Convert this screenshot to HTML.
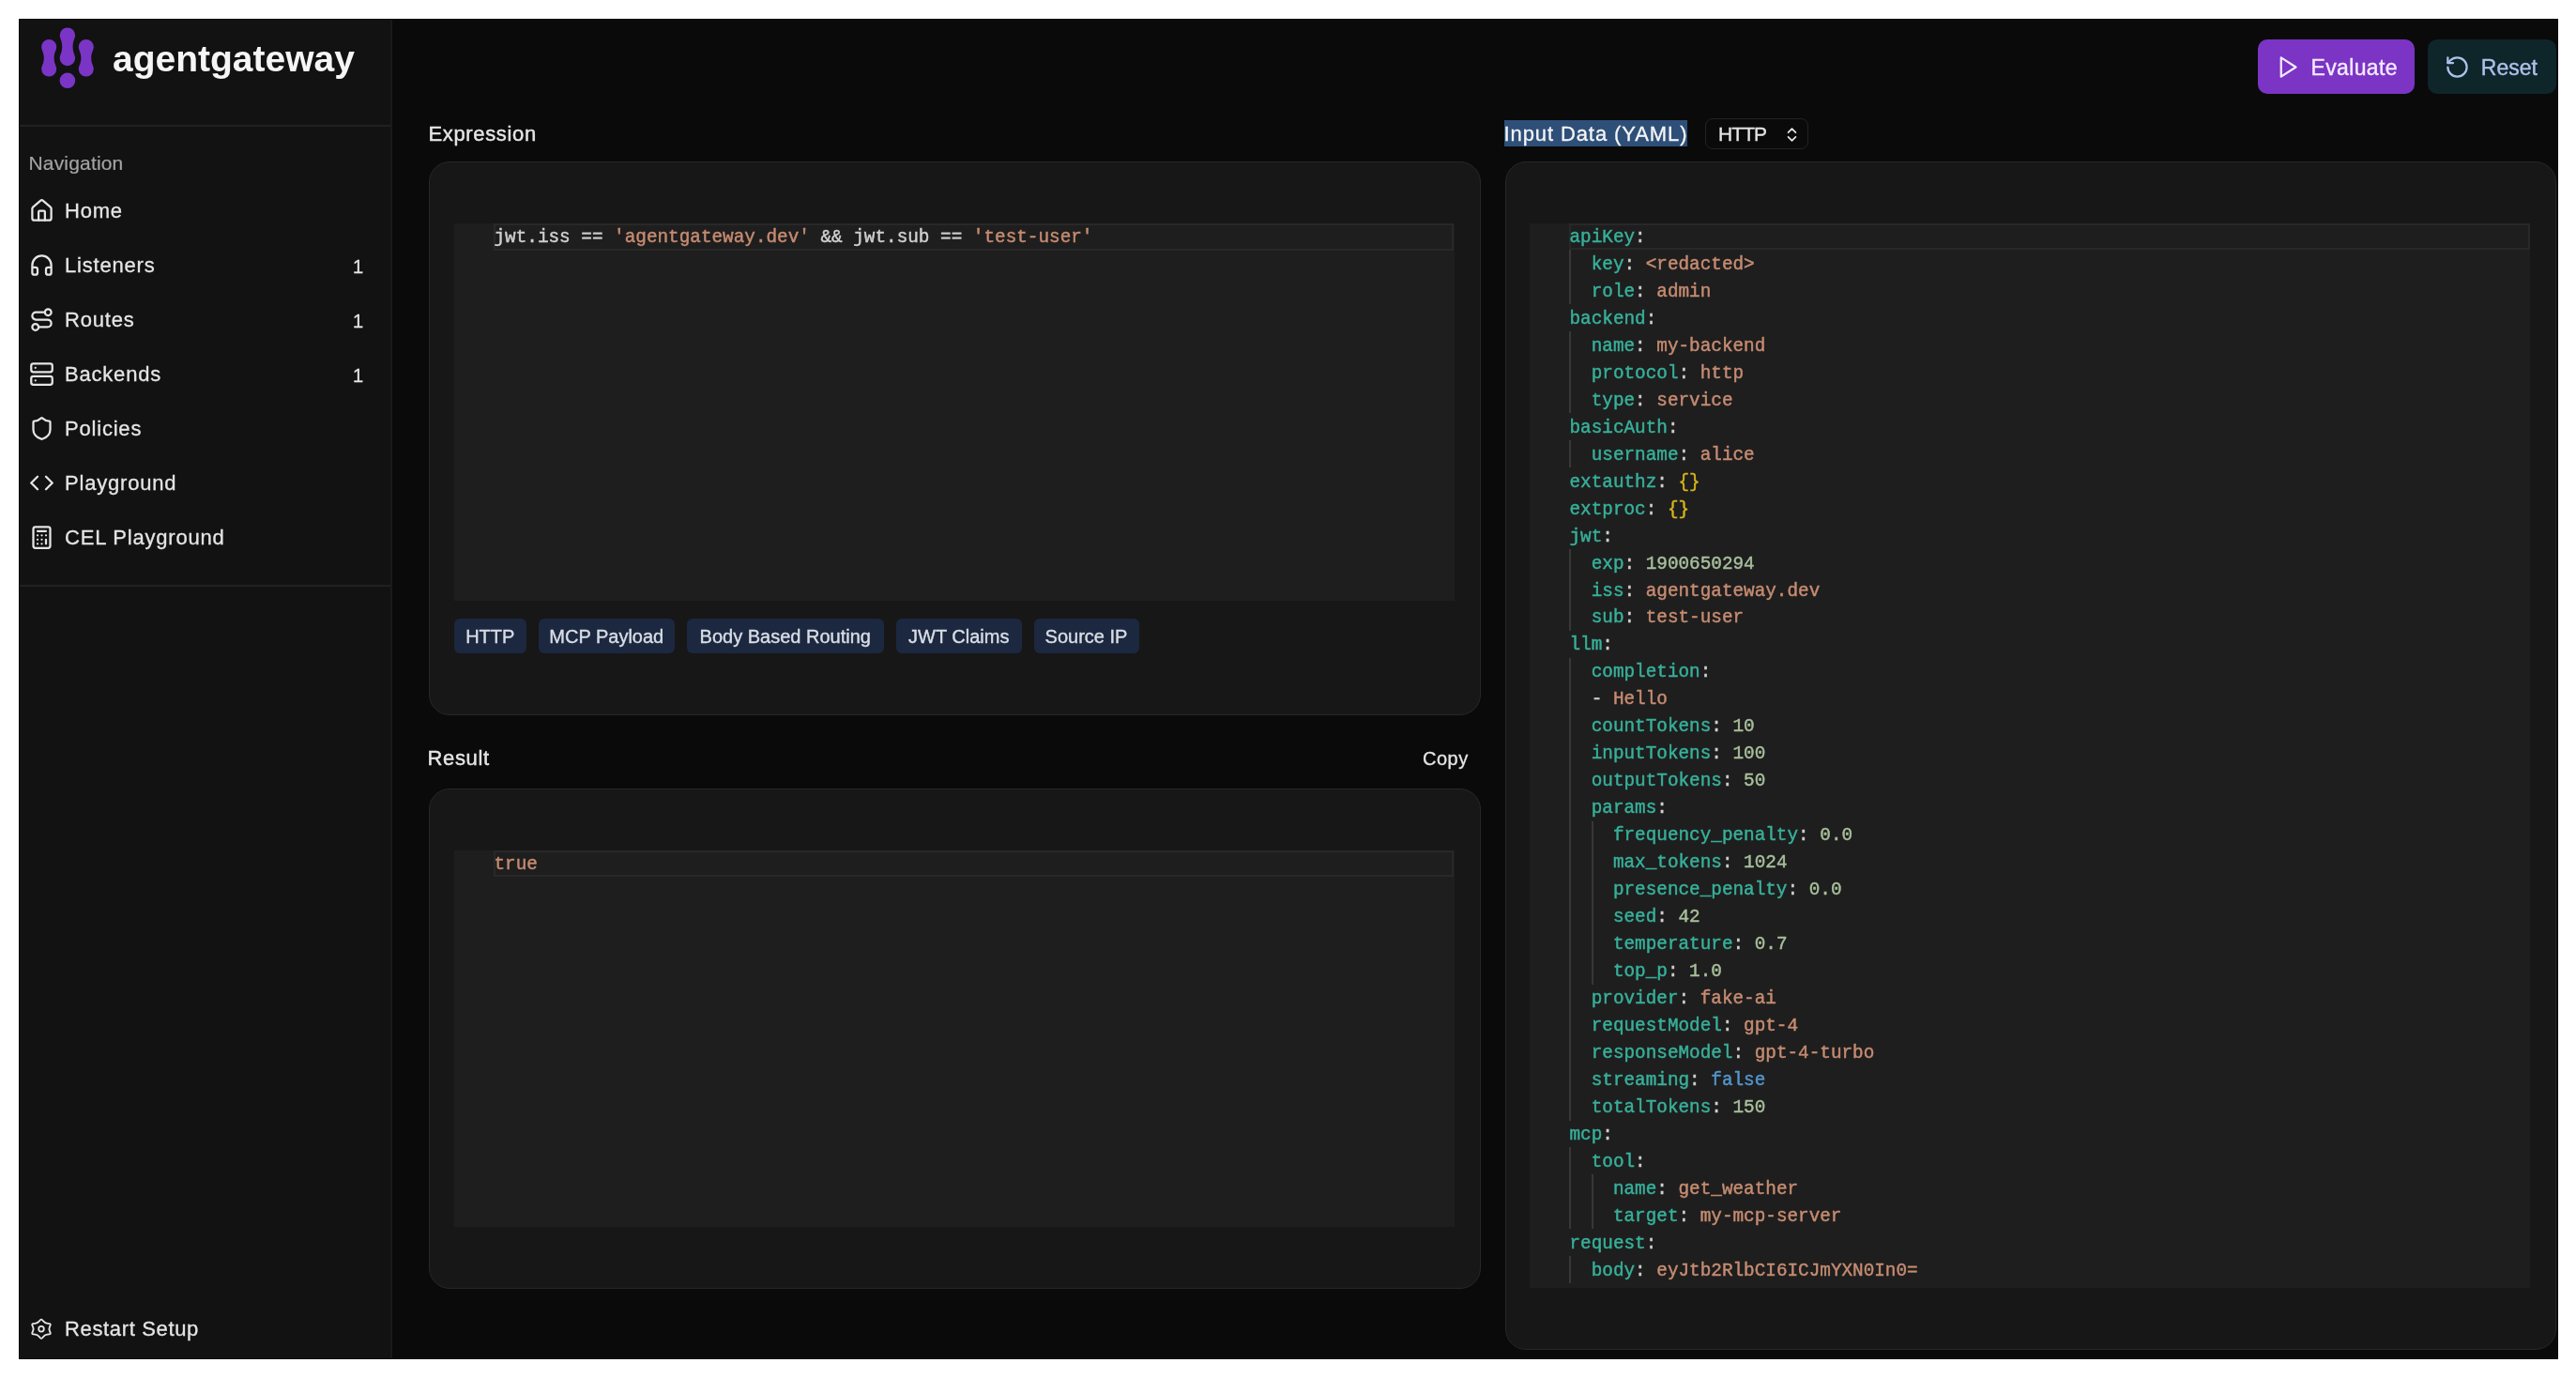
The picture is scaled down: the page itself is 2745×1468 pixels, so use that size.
<!DOCTYPE html>
<html><head><meta charset="utf-8"><title>agentgateway CEL Playground</title>
<style>
html,body{margin:0;padding:0;}
body{width:2745px;height:1468px;background:#ffffff;position:relative;overflow:hidden;font-family:'Liberation Sans', sans-serif;}
#root{position:absolute;left:0;top:0;width:2745px;height:1468px;will-change:transform;}
.r{position:absolute;display:block;}
.t{position:absolute;white-space:pre;}
.tag{background:#1c2840;border-radius:6px;color:#d8dde5;font-size:20px;line-height:39px;-webkit-text-stroke:0.4px #d8dde5;text-align:center;font-family:'Liberation Sans', sans-serif;white-space:pre;}
</style></head><body>
<div id="root">
<div class="r" style="left:20px;top:20px;width:2706px;height:1428px;background:#0a0a0a;"></div>
<div class="r" style="left:20px;top:20px;width:396px;height:1428px;background:#121212;"></div>
<div class="r" style="left:416px;top:20px;width:2px;height:1428px;background:#1a1a1a;"></div>
<div class="r" style="left:20px;top:133px;width:396px;height:2px;background:#212121;"></div>
<div class="r" style="left:20px;top:623px;width:396px;height:2px;background:#212121;"></div>
<svg class="r" style="left:36px;top:24px" width="72" height="76" viewBox="36 24 72 76">
<g fill="#7b35c6">
<path d="M44.2,50 a8,8 0 0 1 16,0 c0,3.5 -2.6,5.8 -2.6,11.8 c0,6 2.6,8.3 2.6,11.8 a8,8 0 0 1 -16,0 c0,-3.5 2.6,-5.8 2.6,-11.8 c0,-6 -2.6,-8.3 -2.6,-11.8z"/>
<path d="M83.8,50 a8,8 0 0 1 16,0 c0,3.5 -2.6,5.8 -2.6,11.8 c0,6 2.6,8.3 2.6,11.8 a8,8 0 0 1 -16,0 c0,-3.5 2.6,-5.8 2.6,-11.8 c0,-6 -2.6,-8.3 -2.6,-11.8z"/>
<path d="M63.7,37.6 a8.2,8.2 0 0 1 16.4,0 c0,3.4 -2.5,5.6 -2.5,12.2 c0,6.6 2.5,8.8 2.5,12.2 a8.2,8.2 0 0 1 -16.4,0 c0,-3.4 2.5,-5.6 2.5,-12.2 c0,-6.6 -2.5,-8.8 -2.5,-12.2z"/>
<circle cx="71.9" cy="85.8" r="8.3"/>
</g></svg>
<div class="t" style="left:120.00px;top:42.98px;font-size:39px;line-height:39px;color:#f5f5f5;font-weight:700;font-family:'Liberation Sans', sans-serif;">agentgateway</div>
<div class="t" style="left:30.50px;top:163.42px;font-size:21px;line-height:21px;color:#a3a3a3;font-weight:400;font-family:'Liberation Sans', sans-serif;letter-spacing:0.17px;-webkit-text-stroke:0.2px #a3a3a3;">Navigation</div>
<svg class="r" style="left:30.50px;top:210.50px" width="27" height="27" viewBox="0 0 24 24" fill="none" stroke="#e5e5e5" stroke-width="2" stroke-linecap="round" stroke-linejoin="round"><path d="M15 21v-8a1 1 0 0 0-1-1h-4a1 1 0 0 0-1 1v8"/><path d="M3 10a2 2 0 0 1 .709-1.528l7-5.999a2 2 0 0 1 2.582 0l7 5.999A2 2 0 0 1 21 10v9a2 2 0 0 1-2 2H5a2 2 0 0 1-2-2z"/></svg>
<div class="t" style="left:69.00px;top:213.87px;font-size:22px;line-height:22px;color:#e5e5e5;font-weight:400;font-family:'Liberation Sans', sans-serif;letter-spacing:0.8px;-webkit-text-stroke:0.3px #e5e5e5;">Home</div>
<svg class="r" style="left:30.50px;top:268.50px" width="27" height="27" viewBox="0 0 24 24" fill="none" stroke="#e5e5e5" stroke-width="2" stroke-linecap="round" stroke-linejoin="round"><path d="M3 14h3a2 2 0 0 1 2 2v3a2 2 0 0 1-2 2H5a2 2 0 0 1-2-2v-7a9 9 0 0 1 18 0v7a2 2 0 0 1-2 2h-1a2 2 0 0 1-2-2v-3a2 2 0 0 1 2-2h3"/></svg>
<div class="t" style="left:69.00px;top:271.87px;font-size:22px;line-height:22px;color:#e5e5e5;font-weight:400;font-family:'Liberation Sans', sans-serif;letter-spacing:0.8px;-webkit-text-stroke:0.3px #e5e5e5;">Listeners</div>
<div class="t" style="left:376.00px;top:273.57px;font-size:20px;line-height:20px;color:#e5e5e5;font-weight:400;font-family:'Liberation Sans', sans-serif;-webkit-text-stroke:0.3px #e5e5e5;">1</div>
<svg class="r" style="left:30.50px;top:326.50px" width="27" height="27" viewBox="0 0 24 24" fill="none" stroke="#e5e5e5" stroke-width="2" stroke-linecap="round" stroke-linejoin="round"><circle cx="6" cy="19" r="3"/><path d="M9 19h8.5a3.5 3.5 0 0 0 0-7h-11a3.5 3.5 0 0 1 0-7H15"/><circle cx="18" cy="5" r="3"/></svg>
<div class="t" style="left:69.00px;top:329.87px;font-size:22px;line-height:22px;color:#e5e5e5;font-weight:400;font-family:'Liberation Sans', sans-serif;letter-spacing:0.8px;-webkit-text-stroke:0.3px #e5e5e5;">Routes</div>
<div class="t" style="left:376.00px;top:331.57px;font-size:20px;line-height:20px;color:#e5e5e5;font-weight:400;font-family:'Liberation Sans', sans-serif;-webkit-text-stroke:0.3px #e5e5e5;">1</div>
<svg class="r" style="left:30.50px;top:384.50px" width="27" height="27" viewBox="0 0 24 24" fill="none" stroke="#e5e5e5" stroke-width="2" stroke-linecap="round" stroke-linejoin="round"><rect width="20" height="8" x="2" y="2" rx="2" ry="2"/><rect width="20" height="8" x="2" y="14" rx="2" ry="2"/><line x1="6" x2="6.01" y1="6" y2="6"/><line x1="6" x2="6.01" y1="18" y2="18"/></svg>
<div class="t" style="left:69.00px;top:387.87px;font-size:22px;line-height:22px;color:#e5e5e5;font-weight:400;font-family:'Liberation Sans', sans-serif;letter-spacing:0.8px;-webkit-text-stroke:0.3px #e5e5e5;">Backends</div>
<div class="t" style="left:376.00px;top:389.57px;font-size:20px;line-height:20px;color:#e5e5e5;font-weight:400;font-family:'Liberation Sans', sans-serif;-webkit-text-stroke:0.3px #e5e5e5;">1</div>
<svg class="r" style="left:30.50px;top:442.50px" width="27" height="27" viewBox="0 0 24 24" fill="none" stroke="#e5e5e5" stroke-width="2" stroke-linecap="round" stroke-linejoin="round"><path d="M20 13c0 5-3.5 7.5-7.66 8.95a1 1 0 0 1-.67-.01C7.5 20.5 4 18 4 13V6a1 1 0 0 1 1-1c2 0 4.5-1.2 6.24-2.72a1.17 1.17 0 0 1 1.52 0C14.51 3.81 17 5 19 5a1 1 0 0 1 1 1z"/></svg>
<div class="t" style="left:69.00px;top:445.87px;font-size:22px;line-height:22px;color:#e5e5e5;font-weight:400;font-family:'Liberation Sans', sans-serif;letter-spacing:0.8px;-webkit-text-stroke:0.3px #e5e5e5;">Policies</div>
<svg class="r" style="left:30.50px;top:500.50px" width="27" height="27" viewBox="0 0 24 24" fill="none" stroke="#e5e5e5" stroke-width="2" stroke-linecap="round" stroke-linejoin="round"><polyline points="16 18 22 12 16 6"/><polyline points="8 6 2 12 8 18"/></svg>
<div class="t" style="left:69.00px;top:503.87px;font-size:22px;line-height:22px;color:#e5e5e5;font-weight:400;font-family:'Liberation Sans', sans-serif;letter-spacing:0.8px;-webkit-text-stroke:0.3px #e5e5e5;">Playground</div>
<svg class="r" style="left:30.50px;top:558.50px" width="27" height="27" viewBox="0 0 24 24" fill="none" stroke="#e5e5e5" stroke-width="2" stroke-linecap="round" stroke-linejoin="round"><rect width="16" height="20" x="4" y="2" rx="2"/><line x1="8" x2="16" y1="6" y2="6"/><line x1="16" x2="16" y1="14" y2="18"/><path d="M16 10h.01"/><path d="M12 10h.01"/><path d="M8 10h.01"/><path d="M12 14h.01"/><path d="M8 14h.01"/><path d="M12 18h.01"/><path d="M8 18h.01"/></svg>
<div class="t" style="left:69.00px;top:561.87px;font-size:22px;line-height:22px;color:#e5e5e5;font-weight:400;font-family:'Liberation Sans', sans-serif;letter-spacing:0.8px;-webkit-text-stroke:0.3px #e5e5e5;">CEL Playground</div>
<svg class="r" style="left:26px;top:1395px" width="40" height="40" viewBox="0 0 40 40" fill="none" stroke="#e5e5e5" stroke-width="1.8" stroke-linejoin="round"><path d="M16.89,11.23 Q18.00,9.95 19.11,11.23 L20.38,12.69 Q21.96,14.51 24.49,14.85 L26.52,15.12 Q28.29,15.35 27.63,16.86 L26.87,18.59 Q25.92,20.75 26.87,22.91 L27.63,24.64 Q28.29,26.15 26.52,26.38 L24.49,26.65 Q21.96,26.99 20.38,28.81 L19.11,30.27 Q18.00,31.55 16.89,30.27 L15.62,28.81 Q14.04,26.99 11.51,26.65 L9.48,26.38 Q7.71,26.15 8.37,24.64 L9.13,22.91 Q10.08,20.75 9.13,18.59 L8.37,16.86 Q7.71,15.35 9.48,15.12 L11.51,14.85 Q14.04,14.51 15.62,12.69Z"/><circle cx="18" cy="20.75" r="2.8"/></svg>
<div class="t" style="left:69.00px;top:1405.37px;font-size:22px;line-height:22px;color:#e5e5e5;font-weight:400;font-family:'Liberation Sans', sans-serif;letter-spacing:0.65px;-webkit-text-stroke:0.3px #e5e5e5;">Restart Setup</div>
<div class="r" style="left:2406px;top:42px;width:167px;height:58px;background:#7b34c4;border-radius:10px;"></div>
<svg class="r" style="left:2424px;top:57.5px" width="27" height="27" viewBox="0 0 24 24" fill="none" stroke="#f3eaff" stroke-width="2" stroke-linecap="round" stroke-linejoin="round"><polygon points="6 3 20 12 6 21 6 3"/></svg>
<div class="t" style="left:2462.50px;top:60.93px;font-size:23px;line-height:23px;color:#f3eaff;font-weight:400;font-family:'Liberation Sans', sans-serif;letter-spacing:0.35px;-webkit-text-stroke:0.4px #f3eaff;">Evaluate</div>
<div class="r" style="left:2587px;top:42px;width:137px;height:58px;background:#0e252a;border-radius:10px;"></div>
<svg class="r" style="left:2605px;top:57.5px" width="27" height="27" viewBox="0 0 24 24" fill="none" stroke="#a9c3e8" stroke-width="2" stroke-linecap="round" stroke-linejoin="round"><path d="M3 12a9 9 0 1 0 9-9 9.75 9.75 0 0 0-6.74 2.74L3 8"/><path d="M3 3v5h5"/></svg>
<div class="t" style="left:2643.80px;top:60.93px;font-size:23px;line-height:23px;color:#adc2ea;font-weight:400;font-family:'Liberation Sans', sans-serif;-webkit-text-stroke:0.4px #adc2ea;">Reset</div>
<div class="t" style="left:456.50px;top:132.37px;font-size:22px;line-height:22px;color:#e5e5e5;font-weight:400;font-family:'Liberation Sans', sans-serif;letter-spacing:0.65px;-webkit-text-stroke:0.45px #e5e5e5;">Expression</div>
<div class="t" style="left:455.50px;top:797.17px;font-size:22px;line-height:22px;color:#e5e5e5;font-weight:400;font-family:'Liberation Sans', sans-serif;letter-spacing:0.65px;-webkit-text-stroke:0.45px #e5e5e5;">Result</div>
<div class="t" style="left:1516.00px;top:798.07px;font-size:20px;line-height:20px;color:#e5e5e5;font-weight:400;font-family:'Liberation Sans', sans-serif;letter-spacing:0.5px;-webkit-text-stroke:0.3px #e5e5e5;">Copy</div>
<div class="r" style="left:1603px;top:127.5px;width:195px;height:28.0px;background:#2e4f78;"></div>
<div class="t" style="left:1602.50px;top:131.97px;font-size:22px;line-height:22px;color:#f5f5f5;font-weight:400;font-family:'Liberation Sans', sans-serif;letter-spacing:0.9px;-webkit-text-stroke:0.3px #f5f5f5;">Input Data (YAML)</div>
<div class="r" style="left:1817px;top:126px;width:110px;height:32.5px;background:#0a0a0a;border:1.5px solid #232323;border-radius:8px;box-sizing:border-box;"></div>
<div class="t" style="left:1831.00px;top:132.22px;font-size:21px;line-height:21px;color:#e5e5e5;font-weight:400;font-family:'Liberation Sans', sans-serif;letter-spacing:-0.9px;-webkit-text-stroke:0.3px #e5e5e5;">HTTP</div>
<svg class="r" style="left:1900px;top:133.5px" width="19" height="19" viewBox="0 0 24 24" fill="none" stroke="#e5e5e5" stroke-width="2.2" stroke-linecap="round" stroke-linejoin="round"><path d="m7 15 5 5 5-5"/><path d="m7 9 5-5 5 5"/></svg>
<div class="r" style="left:457px;top:172px;width:1121px;height:590px;background:#171717;border:1px solid #272727;border-radius:22px;box-sizing:border-box;"></div>
<div class="r" style="left:484px;top:238px;width:1066px;height:402px;background:#1e1e1e;"></div>
<div class="r" style="left:457px;top:840px;width:1121px;height:533px;background:#171717;border:1px solid #272727;border-radius:22px;box-sizing:border-box;"></div>
<div class="r" style="left:484px;top:906px;width:1066px;height:401px;background:#1e1e1e;"></div>
<div class="r" style="left:1604px;top:172px;width:1120px;height:1266px;background:#171717;border:1px solid #272727;border-radius:22px;box-sizing:border-box;"></div>
<div class="r" style="left:1630px;top:238px;width:1066px;height:1134px;background:#1e1e1e;"></div>
<div class="r tag" style="left:484px;top:659px;width:76.5px;height:37px;">HTTP</div>
<div class="r tag" style="left:574px;top:659px;width:144.5px;height:37px;">MCP Payload</div>
<div class="r tag" style="left:732px;top:659px;width:209.5px;height:37px;">Body Based Routing</div>
<div class="r tag" style="left:955px;top:659px;width:133.5px;height:37px;">JWT Claims</div>
<div class="r tag" style="left:1101.5px;top:659px;width:112.0px;height:37px;">Source IP</div>
<div class="r" style="left:526px;top:238px;width:1023px;height:28.970000000000027px;border:2px solid #282828;box-sizing:border-box;"></div>
<div class="t" style="left:526.50px;top:244.39px;font-size:19.33px;line-height:19.33px;color:#cfcfcf;font-weight:400;font-family:'Liberation Mono', monospace;"><span style="color:#cfcfcf;-webkit-text-stroke:0.45px #cfcfcf">jwt.iss == </span><span style="color:#c68b71;-webkit-text-stroke:0.45px #c68b71">'agentgateway.dev'</span><span style="color:#cfcfcf;-webkit-text-stroke:0.45px #cfcfcf"> &amp;&amp; jwt.sub == </span><span style="color:#c68b71;-webkit-text-stroke:0.45px #c68b71">'test-user'</span></div>
<div class="r" style="left:526px;top:905.5px;width:1023px;height:28.970000000000027px;border:2px solid #282828;box-sizing:border-box;"></div>
<div class="t" style="left:526.50px;top:911.89px;font-size:19.33px;line-height:19.33px;color:#cfcfcf;font-weight:400;font-family:'Liberation Mono', monospace;"><span style="color:#c68b71;-webkit-text-stroke:0.45px #c68b71">true</span></div>
<div class="r" style="left:1672px;top:237.5px;width:1024px;height:28.970000000000027px;border:2px solid #282828;box-sizing:border-box;"></div>
<div class="t" style="left:1672.50px;top:243.89px;font-size:19.33px;line-height:19.33px;color:#cfcfcf;font-weight:400;font-family:'Liberation Mono', monospace;"><span style="color:#37b09a;-webkit-text-stroke:0.45px #37b09a">apiKey</span><span style="color:#cfcfcf;-webkit-text-stroke:0.45px #cfcfcf">:</span></div>
<div class="r" style="left:1672px;top:266px;width:2px;height:29px;background:#383838;"></div>
<div class="t" style="left:1695.70px;top:272.86px;font-size:19.33px;line-height:19.33px;color:#cfcfcf;font-weight:400;font-family:'Liberation Mono', monospace;"><span style="color:#37b09a;-webkit-text-stroke:0.45px #37b09a">key</span><span style="color:#cfcfcf;-webkit-text-stroke:0.45px #cfcfcf">: </span><span style="color:#c68b71;-webkit-text-stroke:0.45px #c68b71">&lt;redacted&gt;</span></div>
<div class="r" style="left:1672px;top:295px;width:2px;height:29px;background:#383838;"></div>
<div class="t" style="left:1695.70px;top:301.83px;font-size:19.33px;line-height:19.33px;color:#cfcfcf;font-weight:400;font-family:'Liberation Mono', monospace;"><span style="color:#37b09a;-webkit-text-stroke:0.45px #37b09a">role</span><span style="color:#cfcfcf;-webkit-text-stroke:0.45px #cfcfcf">: </span><span style="color:#c68b71;-webkit-text-stroke:0.45px #c68b71">admin</span></div>
<div class="t" style="left:1672.50px;top:330.80px;font-size:19.33px;line-height:19.33px;color:#cfcfcf;font-weight:400;font-family:'Liberation Mono', monospace;"><span style="color:#37b09a;-webkit-text-stroke:0.45px #37b09a">backend</span><span style="color:#cfcfcf;-webkit-text-stroke:0.45px #cfcfcf">:</span></div>
<div class="r" style="left:1672px;top:353px;width:2px;height:29px;background:#383838;"></div>
<div class="t" style="left:1695.70px;top:359.77px;font-size:19.33px;line-height:19.33px;color:#cfcfcf;font-weight:400;font-family:'Liberation Mono', monospace;"><span style="color:#37b09a;-webkit-text-stroke:0.45px #37b09a">name</span><span style="color:#cfcfcf;-webkit-text-stroke:0.45px #cfcfcf">: </span><span style="color:#c68b71;-webkit-text-stroke:0.45px #c68b71">my-backend</span></div>
<div class="r" style="left:1672px;top:382px;width:2px;height:29px;background:#383838;"></div>
<div class="t" style="left:1695.70px;top:388.74px;font-size:19.33px;line-height:19.33px;color:#cfcfcf;font-weight:400;font-family:'Liberation Mono', monospace;"><span style="color:#37b09a;-webkit-text-stroke:0.45px #37b09a">protocol</span><span style="color:#cfcfcf;-webkit-text-stroke:0.45px #cfcfcf">: </span><span style="color:#c68b71;-webkit-text-stroke:0.45px #c68b71">http</span></div>
<div class="r" style="left:1672px;top:411px;width:2px;height:29px;background:#383838;"></div>
<div class="t" style="left:1695.70px;top:417.71px;font-size:19.33px;line-height:19.33px;color:#cfcfcf;font-weight:400;font-family:'Liberation Mono', monospace;"><span style="color:#37b09a;-webkit-text-stroke:0.45px #37b09a">type</span><span style="color:#cfcfcf;-webkit-text-stroke:0.45px #cfcfcf">: </span><span style="color:#c68b71;-webkit-text-stroke:0.45px #c68b71">service</span></div>
<div class="t" style="left:1672.50px;top:446.68px;font-size:19.33px;line-height:19.33px;color:#cfcfcf;font-weight:400;font-family:'Liberation Mono', monospace;"><span style="color:#37b09a;-webkit-text-stroke:0.45px #37b09a">basicAuth</span><span style="color:#cfcfcf;-webkit-text-stroke:0.45px #cfcfcf">:</span></div>
<div class="r" style="left:1672px;top:469px;width:2px;height:29px;background:#383838;"></div>
<div class="t" style="left:1695.70px;top:475.65px;font-size:19.33px;line-height:19.33px;color:#cfcfcf;font-weight:400;font-family:'Liberation Mono', monospace;"><span style="color:#37b09a;-webkit-text-stroke:0.45px #37b09a">username</span><span style="color:#cfcfcf;-webkit-text-stroke:0.45px #cfcfcf">: </span><span style="color:#c68b71;-webkit-text-stroke:0.45px #c68b71">alice</span></div>
<div class="t" style="left:1672.50px;top:504.62px;font-size:19.33px;line-height:19.33px;color:#cfcfcf;font-weight:400;font-family:'Liberation Mono', monospace;"><span style="color:#37b09a;-webkit-text-stroke:0.45px #37b09a">extauthz</span><span style="color:#cfcfcf;-webkit-text-stroke:0.45px #cfcfcf">: </span><span style="color:#d6b31c;-webkit-text-stroke:0.45px #d6b31c">{}</span></div>
<div class="t" style="left:1672.50px;top:533.59px;font-size:19.33px;line-height:19.33px;color:#cfcfcf;font-weight:400;font-family:'Liberation Mono', monospace;"><span style="color:#37b09a;-webkit-text-stroke:0.45px #37b09a">extproc</span><span style="color:#cfcfcf;-webkit-text-stroke:0.45px #cfcfcf">: </span><span style="color:#d6b31c;-webkit-text-stroke:0.45px #d6b31c">{}</span></div>
<div class="t" style="left:1672.50px;top:562.56px;font-size:19.33px;line-height:19.33px;color:#cfcfcf;font-weight:400;font-family:'Liberation Mono', monospace;"><span style="color:#37b09a;-webkit-text-stroke:0.45px #37b09a">jwt</span><span style="color:#cfcfcf;-webkit-text-stroke:0.45px #cfcfcf">:</span></div>
<div class="r" style="left:1672px;top:585px;width:2px;height:29px;background:#383838;"></div>
<div class="t" style="left:1695.70px;top:591.53px;font-size:19.33px;line-height:19.33px;color:#cfcfcf;font-weight:400;font-family:'Liberation Mono', monospace;"><span style="color:#37b09a;-webkit-text-stroke:0.45px #37b09a">exp</span><span style="color:#cfcfcf;-webkit-text-stroke:0.45px #cfcfcf">: </span><span style="color:#a8bf9b;-webkit-text-stroke:0.45px #a8bf9b">1900650294</span></div>
<div class="r" style="left:1672px;top:614px;width:2px;height:29px;background:#383838;"></div>
<div class="t" style="left:1695.70px;top:620.50px;font-size:19.33px;line-height:19.33px;color:#cfcfcf;font-weight:400;font-family:'Liberation Mono', monospace;"><span style="color:#37b09a;-webkit-text-stroke:0.45px #37b09a">iss</span><span style="color:#cfcfcf;-webkit-text-stroke:0.45px #cfcfcf">: </span><span style="color:#c68b71;-webkit-text-stroke:0.45px #c68b71">agentgateway.dev</span></div>
<div class="r" style="left:1672px;top:643px;width:2px;height:29px;background:#383838;"></div>
<div class="t" style="left:1695.70px;top:649.47px;font-size:19.33px;line-height:19.33px;color:#cfcfcf;font-weight:400;font-family:'Liberation Mono', monospace;"><span style="color:#37b09a;-webkit-text-stroke:0.45px #37b09a">sub</span><span style="color:#cfcfcf;-webkit-text-stroke:0.45px #cfcfcf">: </span><span style="color:#c68b71;-webkit-text-stroke:0.45px #c68b71">test-user</span></div>
<div class="t" style="left:1672.50px;top:678.44px;font-size:19.33px;line-height:19.33px;color:#cfcfcf;font-weight:400;font-family:'Liberation Mono', monospace;"><span style="color:#37b09a;-webkit-text-stroke:0.45px #37b09a">llm</span><span style="color:#cfcfcf;-webkit-text-stroke:0.45px #cfcfcf">:</span></div>
<div class="r" style="left:1672px;top:701px;width:2px;height:29px;background:#383838;"></div>
<div class="t" style="left:1695.70px;top:707.41px;font-size:19.33px;line-height:19.33px;color:#cfcfcf;font-weight:400;font-family:'Liberation Mono', monospace;"><span style="color:#37b09a;-webkit-text-stroke:0.45px #37b09a">completion</span><span style="color:#cfcfcf;-webkit-text-stroke:0.45px #cfcfcf">:</span></div>
<div class="r" style="left:1672px;top:730px;width:2px;height:29px;background:#383838;"></div>
<div class="t" style="left:1695.70px;top:736.38px;font-size:19.33px;line-height:19.33px;color:#cfcfcf;font-weight:400;font-family:'Liberation Mono', monospace;"><span style="color:#cfcfcf;-webkit-text-stroke:0.45px #cfcfcf">- </span><span style="color:#c68b71;-webkit-text-stroke:0.45px #c68b71">Hello</span></div>
<div class="r" style="left:1672px;top:759px;width:2px;height:29px;background:#383838;"></div>
<div class="t" style="left:1695.70px;top:765.35px;font-size:19.33px;line-height:19.33px;color:#cfcfcf;font-weight:400;font-family:'Liberation Mono', monospace;"><span style="color:#37b09a;-webkit-text-stroke:0.45px #37b09a">countTokens</span><span style="color:#cfcfcf;-webkit-text-stroke:0.45px #cfcfcf">: </span><span style="color:#a8bf9b;-webkit-text-stroke:0.45px #a8bf9b">10</span></div>
<div class="r" style="left:1672px;top:788px;width:2px;height:29px;background:#383838;"></div>
<div class="t" style="left:1695.70px;top:794.32px;font-size:19.33px;line-height:19.33px;color:#cfcfcf;font-weight:400;font-family:'Liberation Mono', monospace;"><span style="color:#37b09a;-webkit-text-stroke:0.45px #37b09a">inputTokens</span><span style="color:#cfcfcf;-webkit-text-stroke:0.45px #cfcfcf">: </span><span style="color:#a8bf9b;-webkit-text-stroke:0.45px #a8bf9b">100</span></div>
<div class="r" style="left:1672px;top:817px;width:2px;height:29px;background:#383838;"></div>
<div class="t" style="left:1695.70px;top:823.29px;font-size:19.33px;line-height:19.33px;color:#cfcfcf;font-weight:400;font-family:'Liberation Mono', monospace;"><span style="color:#37b09a;-webkit-text-stroke:0.45px #37b09a">outputTokens</span><span style="color:#cfcfcf;-webkit-text-stroke:0.45px #cfcfcf">: </span><span style="color:#a8bf9b;-webkit-text-stroke:0.45px #a8bf9b">50</span></div>
<div class="r" style="left:1672px;top:846px;width:2px;height:29px;background:#383838;"></div>
<div class="t" style="left:1695.70px;top:852.26px;font-size:19.33px;line-height:19.33px;color:#cfcfcf;font-weight:400;font-family:'Liberation Mono', monospace;"><span style="color:#37b09a;-webkit-text-stroke:0.45px #37b09a">params</span><span style="color:#cfcfcf;-webkit-text-stroke:0.45px #cfcfcf">:</span></div>
<div class="r" style="left:1672px;top:875px;width:2px;height:29px;background:#383838;"></div>
<div class="r" style="left:1696px;top:875px;width:2px;height:29px;background:#383838;"></div>
<div class="t" style="left:1718.90px;top:881.23px;font-size:19.33px;line-height:19.33px;color:#cfcfcf;font-weight:400;font-family:'Liberation Mono', monospace;"><span style="color:#37b09a;-webkit-text-stroke:0.45px #37b09a">frequency_penalty</span><span style="color:#cfcfcf;-webkit-text-stroke:0.45px #cfcfcf">: </span><span style="color:#a8bf9b;-webkit-text-stroke:0.45px #a8bf9b">0.0</span></div>
<div class="r" style="left:1672px;top:904px;width:2px;height:29px;background:#383838;"></div>
<div class="r" style="left:1696px;top:904px;width:2px;height:29px;background:#383838;"></div>
<div class="t" style="left:1718.90px;top:910.20px;font-size:19.33px;line-height:19.33px;color:#cfcfcf;font-weight:400;font-family:'Liberation Mono', monospace;"><span style="color:#37b09a;-webkit-text-stroke:0.45px #37b09a">max_tokens</span><span style="color:#cfcfcf;-webkit-text-stroke:0.45px #cfcfcf">: </span><span style="color:#a8bf9b;-webkit-text-stroke:0.45px #a8bf9b">1024</span></div>
<div class="r" style="left:1672px;top:933px;width:2px;height:29px;background:#383838;"></div>
<div class="r" style="left:1696px;top:933px;width:2px;height:29px;background:#383838;"></div>
<div class="t" style="left:1718.90px;top:939.17px;font-size:19.33px;line-height:19.33px;color:#cfcfcf;font-weight:400;font-family:'Liberation Mono', monospace;"><span style="color:#37b09a;-webkit-text-stroke:0.45px #37b09a">presence_penalty</span><span style="color:#cfcfcf;-webkit-text-stroke:0.45px #cfcfcf">: </span><span style="color:#a8bf9b;-webkit-text-stroke:0.45px #a8bf9b">0.0</span></div>
<div class="r" style="left:1672px;top:962px;width:2px;height:29px;background:#383838;"></div>
<div class="r" style="left:1696px;top:962px;width:2px;height:29px;background:#383838;"></div>
<div class="t" style="left:1718.90px;top:968.14px;font-size:19.33px;line-height:19.33px;color:#cfcfcf;font-weight:400;font-family:'Liberation Mono', monospace;"><span style="color:#37b09a;-webkit-text-stroke:0.45px #37b09a">seed</span><span style="color:#cfcfcf;-webkit-text-stroke:0.45px #cfcfcf">: </span><span style="color:#a8bf9b;-webkit-text-stroke:0.45px #a8bf9b">42</span></div>
<div class="r" style="left:1672px;top:991px;width:2px;height:29px;background:#383838;"></div>
<div class="r" style="left:1696px;top:991px;width:2px;height:29px;background:#383838;"></div>
<div class="t" style="left:1718.90px;top:997.11px;font-size:19.33px;line-height:19.33px;color:#cfcfcf;font-weight:400;font-family:'Liberation Mono', monospace;"><span style="color:#37b09a;-webkit-text-stroke:0.45px #37b09a">temperature</span><span style="color:#cfcfcf;-webkit-text-stroke:0.45px #cfcfcf">: </span><span style="color:#a8bf9b;-webkit-text-stroke:0.45px #a8bf9b">0.7</span></div>
<div class="r" style="left:1672px;top:1020px;width:2px;height:29px;background:#383838;"></div>
<div class="r" style="left:1696px;top:1020px;width:2px;height:29px;background:#383838;"></div>
<div class="t" style="left:1718.90px;top:1026.08px;font-size:19.33px;line-height:19.33px;color:#cfcfcf;font-weight:400;font-family:'Liberation Mono', monospace;"><span style="color:#37b09a;-webkit-text-stroke:0.45px #37b09a">top_p</span><span style="color:#cfcfcf;-webkit-text-stroke:0.45px #cfcfcf">: </span><span style="color:#a8bf9b;-webkit-text-stroke:0.45px #a8bf9b">1.0</span></div>
<div class="r" style="left:1672px;top:1049px;width:2px;height:29px;background:#383838;"></div>
<div class="t" style="left:1695.70px;top:1055.05px;font-size:19.33px;line-height:19.33px;color:#cfcfcf;font-weight:400;font-family:'Liberation Mono', monospace;"><span style="color:#37b09a;-webkit-text-stroke:0.45px #37b09a">provider</span><span style="color:#cfcfcf;-webkit-text-stroke:0.45px #cfcfcf">: </span><span style="color:#c68b71;-webkit-text-stroke:0.45px #c68b71">fake-ai</span></div>
<div class="r" style="left:1672px;top:1078px;width:2px;height:29px;background:#383838;"></div>
<div class="t" style="left:1695.70px;top:1084.02px;font-size:19.33px;line-height:19.33px;color:#cfcfcf;font-weight:400;font-family:'Liberation Mono', monospace;"><span style="color:#37b09a;-webkit-text-stroke:0.45px #37b09a">requestModel</span><span style="color:#cfcfcf;-webkit-text-stroke:0.45px #cfcfcf">: </span><span style="color:#c68b71;-webkit-text-stroke:0.45px #c68b71">gpt-4</span></div>
<div class="r" style="left:1672px;top:1107px;width:2px;height:29px;background:#383838;"></div>
<div class="t" style="left:1695.70px;top:1112.99px;font-size:19.33px;line-height:19.33px;color:#cfcfcf;font-weight:400;font-family:'Liberation Mono', monospace;"><span style="color:#37b09a;-webkit-text-stroke:0.45px #37b09a">responseModel</span><span style="color:#cfcfcf;-webkit-text-stroke:0.45px #cfcfcf">: </span><span style="color:#c68b71;-webkit-text-stroke:0.45px #c68b71">gpt-4-turbo</span></div>
<div class="r" style="left:1672px;top:1136px;width:2px;height:29px;background:#383838;"></div>
<div class="t" style="left:1695.70px;top:1141.96px;font-size:19.33px;line-height:19.33px;color:#cfcfcf;font-weight:400;font-family:'Liberation Mono', monospace;"><span style="color:#37b09a;-webkit-text-stroke:0.45px #37b09a">streaming</span><span style="color:#cfcfcf;-webkit-text-stroke:0.45px #cfcfcf">: </span><span style="color:#5395cc;-webkit-text-stroke:0.45px #5395cc">false</span></div>
<div class="r" style="left:1672px;top:1165px;width:2px;height:29px;background:#383838;"></div>
<div class="t" style="left:1695.70px;top:1170.93px;font-size:19.33px;line-height:19.33px;color:#cfcfcf;font-weight:400;font-family:'Liberation Mono', monospace;"><span style="color:#37b09a;-webkit-text-stroke:0.45px #37b09a">totalTokens</span><span style="color:#cfcfcf;-webkit-text-stroke:0.45px #cfcfcf">: </span><span style="color:#a8bf9b;-webkit-text-stroke:0.45px #a8bf9b">150</span></div>
<div class="t" style="left:1672.50px;top:1199.90px;font-size:19.33px;line-height:19.33px;color:#cfcfcf;font-weight:400;font-family:'Liberation Mono', monospace;"><span style="color:#37b09a;-webkit-text-stroke:0.45px #37b09a">mcp</span><span style="color:#cfcfcf;-webkit-text-stroke:0.45px #cfcfcf">:</span></div>
<div class="r" style="left:1672px;top:1222px;width:2px;height:29px;background:#383838;"></div>
<div class="t" style="left:1695.70px;top:1228.87px;font-size:19.33px;line-height:19.33px;color:#cfcfcf;font-weight:400;font-family:'Liberation Mono', monospace;"><span style="color:#37b09a;-webkit-text-stroke:0.45px #37b09a">tool</span><span style="color:#cfcfcf;-webkit-text-stroke:0.45px #cfcfcf">:</span></div>
<div class="r" style="left:1672px;top:1251px;width:2px;height:29px;background:#383838;"></div>
<div class="r" style="left:1696px;top:1251px;width:2px;height:29px;background:#383838;"></div>
<div class="t" style="left:1718.90px;top:1257.84px;font-size:19.33px;line-height:19.33px;color:#cfcfcf;font-weight:400;font-family:'Liberation Mono', monospace;"><span style="color:#37b09a;-webkit-text-stroke:0.45px #37b09a">name</span><span style="color:#cfcfcf;-webkit-text-stroke:0.45px #cfcfcf">: </span><span style="color:#c68b71;-webkit-text-stroke:0.45px #c68b71">get_weather</span></div>
<div class="r" style="left:1672px;top:1280px;width:2px;height:29px;background:#383838;"></div>
<div class="r" style="left:1696px;top:1280px;width:2px;height:29px;background:#383838;"></div>
<div class="t" style="left:1718.90px;top:1286.81px;font-size:19.33px;line-height:19.33px;color:#cfcfcf;font-weight:400;font-family:'Liberation Mono', monospace;"><span style="color:#37b09a;-webkit-text-stroke:0.45px #37b09a">target</span><span style="color:#cfcfcf;-webkit-text-stroke:0.45px #cfcfcf">: </span><span style="color:#c68b71;-webkit-text-stroke:0.45px #c68b71">my-mcp-server</span></div>
<div class="t" style="left:1672.50px;top:1315.78px;font-size:19.33px;line-height:19.33px;color:#cfcfcf;font-weight:400;font-family:'Liberation Mono', monospace;"><span style="color:#37b09a;-webkit-text-stroke:0.45px #37b09a">request</span><span style="color:#cfcfcf;-webkit-text-stroke:0.45px #cfcfcf">:</span></div>
<div class="r" style="left:1672px;top:1338px;width:2px;height:29px;background:#383838;"></div>
<div class="t" style="left:1695.70px;top:1344.75px;font-size:19.33px;line-height:19.33px;color:#cfcfcf;font-weight:400;font-family:'Liberation Mono', monospace;"><span style="color:#37b09a;-webkit-text-stroke:0.45px #37b09a">body</span><span style="color:#cfcfcf;-webkit-text-stroke:0.45px #cfcfcf">: </span><span style="color:#c68b71;-webkit-text-stroke:0.45px #c68b71">eyJtb2RlbCI6ICJmYXN0In0=</span></div>
<div class="r" style="left:20px;top:20px;width:2706px;height:1428px;border:1px solid #000;box-sizing:border-box;"></div>
</div>
</body></html>
